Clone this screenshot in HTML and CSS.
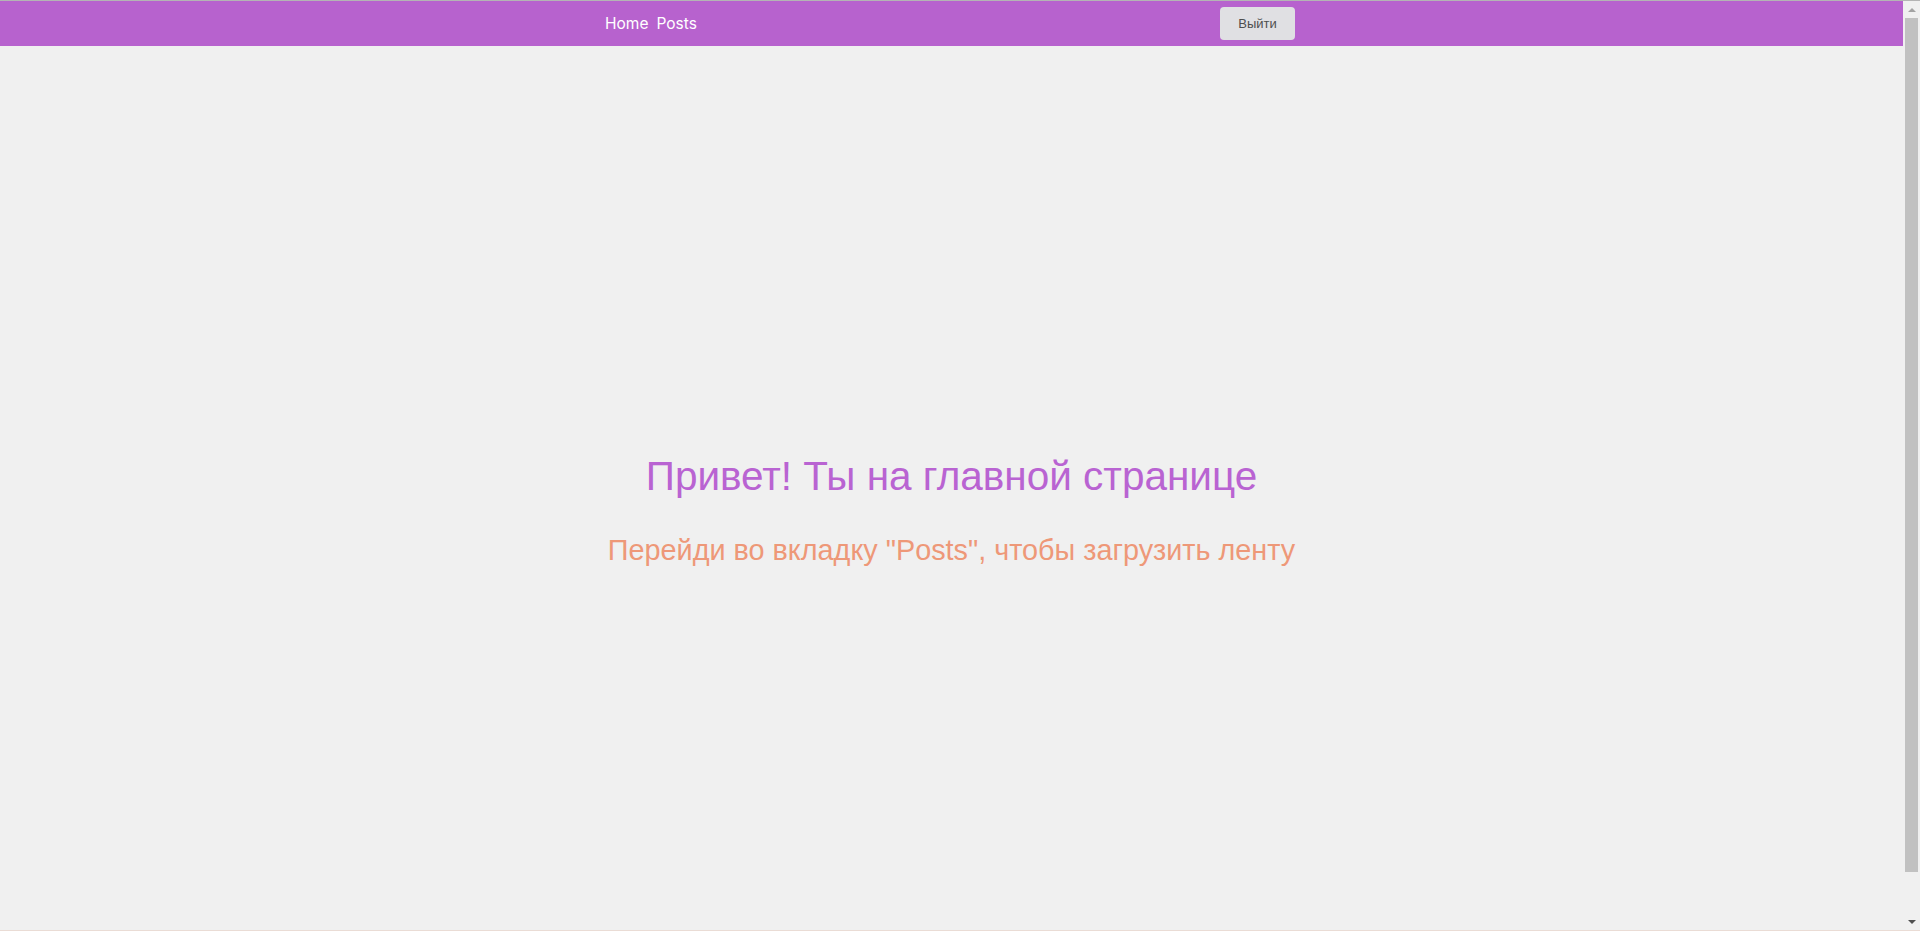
FILE: index.html
```html
<!DOCTYPE html>
<html lang="ru">
<head>
<meta charset="utf-8">
<title>Home</title>
<link rel="stylesheet" href="styles.css">
</head>
<body>
<div class="frame">
  <div class="page">
    <header class="topbar">
      <div class="topbar-inner">
        <nav class="nav">
          <a class="nav-link" href="#">Home</a>
          <a class="nav-link" href="#">Posts</a>
        </nav>
        <button class="logout" type="button">Выйти</button>
      </div>
    </header>
    <main class="content">
      <h1 class="title">Привет! Ты на главной странице</h1>
      <h2 class="subtitle">Перейди во вкладку "Posts", чтобы загрузить ленту</h2>
    </main>
  </div>
  <div class="scrollbar">
    <div class="arrow arrow-up"></div>
    <div class="thumb"></div>
    <div class="arrow arrow-down"></div>
  </div>
</div>
</body>
</html>
```

FILE: styles.css
```css
html, body {
  margin: 0;
  padding: 0;
  height: 100%;
  overflow: hidden;
}

body {
  background: #f0f0f0;
  font-family: "Liberation Sans", Arial, sans-serif;
}

.frame {
  display: flex;
  height: 931px;
  box-sizing: border-box;
  border-top: 1px solid #b4b4b4;
  border-bottom: 1px solid #eadcd5;
}

.page {
  flex: 1;
  display: flex;
  flex-direction: column;
  min-width: 0;
}

.topbar {
  height: 45px;
  background: #b762ce;
  display: flex;
  justify-content: center;
  align-items: center;
  padding-right: 3px;
}

.topbar-inner {
  width: 690px;
  display: flex;
  justify-content: space-between;
  align-items: center;
}

.nav {
  display: flex;
  gap: 8px;
}

.nav-link {
  font-family: Inter, "Noto Sans", sans-serif;
  font-size: 15.5px;
  color: #ffffff;
  text-decoration: none;
}

.logout {
  width: 75px;
  height: 33px;
  border: none;
  border-radius: 4px;
  background: #e0e0e3;
  color: #4e4e4e;
  font-family: "Liberation Sans", Arial, sans-serif;
  font-size: 13px;
  padding: 0;
}

.content {
  flex: 1;
  display: flex;
  flex-direction: column;
  justify-content: center;
  align-items: center;
  padding-top: 43px;
}

.title {
  margin: 0;
  font-size: 40.5px;
  font-weight: 400;
  color: #b963d2;
}

.subtitle {
  margin: 34px 0 0;
  font-size: 28.8px;
  font-weight: 400;
  color: #ee9878;
}

.scrollbar {
  width: 17px;
  background: #f0f0f0;
  display: flex;
  flex-direction: column;
  align-items: center;
}

.arrow {
  width: 0;
  height: 0;
  border-left: 4px solid transparent;
  border-right: 4px solid transparent;
}

.arrow-up {
  margin-top: 7px;
  border-bottom: 4px solid #a3a3a3;
}

.thumb {
  width: 13px;
  margin-top: 6px;
  height: 854px;
  background: #c1c1c1;
}

.arrow-down {
  margin-top: auto;
  margin-bottom: 6px;
  border-top: 4px solid #505050;
}
```
